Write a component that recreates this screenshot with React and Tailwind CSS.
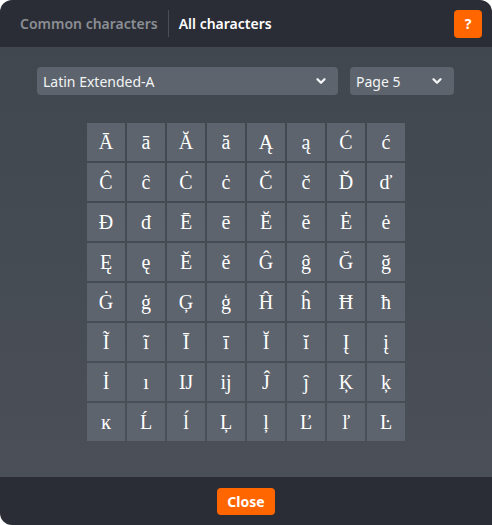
import { ChevronDown } from 'lucide-react'

const chars = Array.from({ length: 64 }, (_, i) => String.fromCharCode(0x100 + i))

function Select({ label, className }) {
  return (
    <div className={`flex h-7 items-center justify-between rounded bg-[#5d646d] pl-1.5 pr-2.5 text-[14px] text-[#f3f4f5] ${className}`}>
      <span>{label}</span>
      <ChevronDown size={14} strokeWidth={4} />
    </div>
  )
}

export default function App() {
  return (
    <div className="h-[525px] w-[492px] bg-white font-['Noto_Sans',sans-serif]">
      <div className="flex h-full flex-col overflow-hidden rounded-t-xl rounded-bl-xl bg-[#2a2d35]">
        <div className="flex h-[47px] shrink-0 items-center pl-5 pr-2.5">
          <span className="text-[14px] font-semibold text-[#8b8e93]">Common characters</span>
          <div className="mx-2.5 h-[27px] w-px bg-[#4a4d55]" />
          <span className="text-[14px] font-semibold text-white">All characters</span>
          <button className="ml-auto grid h-7 w-7 place-items-center rounded bg-[#ff6600] text-[14px] font-bold text-white">
            ?
          </button>
        </div>

        <div className="flex flex-1 flex-col items-center bg-gradient-to-b from-[#41474f] to-[#4b5058] pt-5">
          <div className="flex w-[418px] gap-3">
            <Select label="Latin Extended-A" className="w-[301px]" />
            <Select label="Page 5" className="w-[104px]" />
          </div>
          <div className="mt-7 grid grid-cols-8 gap-0.5">
            {chars.map((c) => (
              <div
                key={c}
                className="grid h-[38px] w-[38px] place-items-center bg-[#5d646d] font-['Liberation_Serif',serif] text-[20px] text-white"
              >
                {c}
              </div>
            ))}
          </div>
        </div>

        <div className="flex h-[48px] shrink-0 items-center justify-center">
          <button className="h-[27px] rounded bg-[#ff6600] px-2.5 text-[14px] font-bold text-white">
            Close
          </button>
        </div>
      </div>
    </div>
  )
}
